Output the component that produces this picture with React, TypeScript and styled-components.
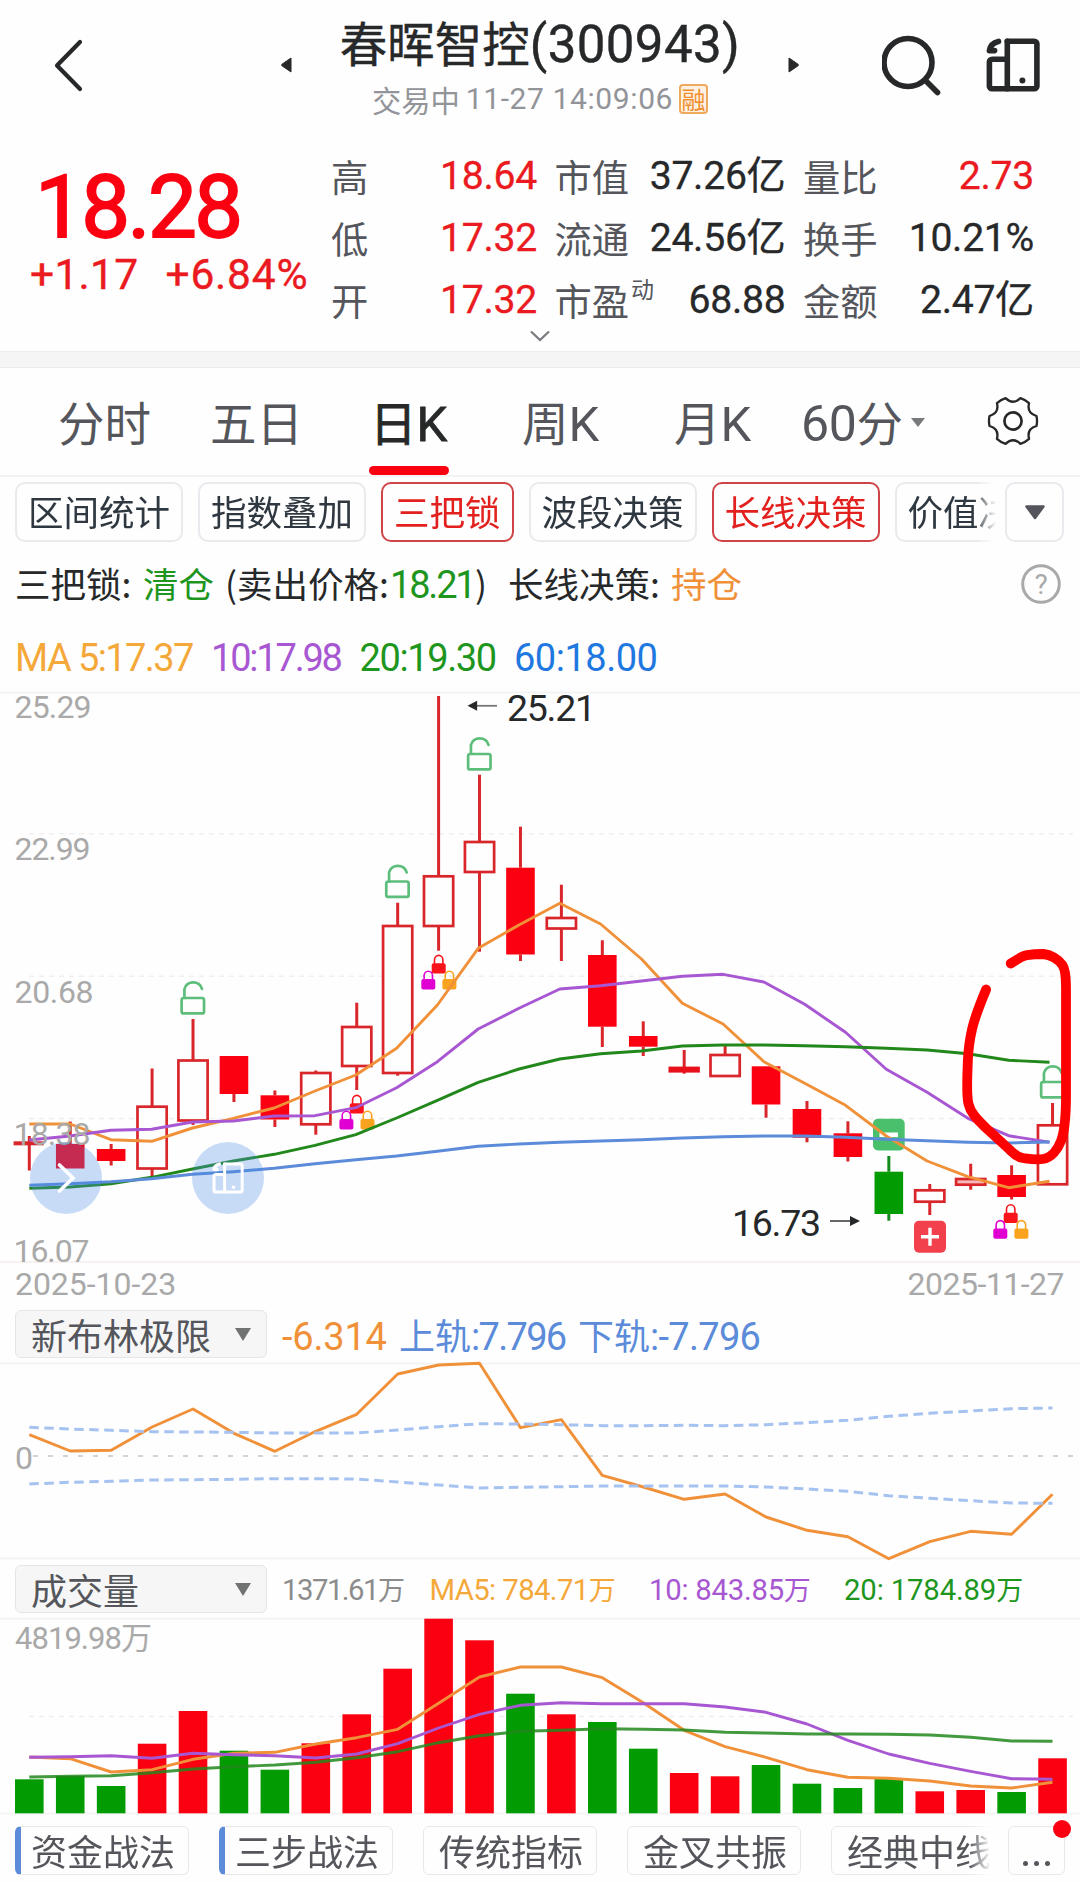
import React from "react";
import styled, { createGlobalStyle, css } from "styled-components";

const CJK = '"Noto Sans CJK SC", sans-serif';
const NUM = 'Roboto, "Noto Sans CJK SC", sans-serif';

const C = {
  red: "#fb0011",
  wick: "#d8262b",
  quoteRed: "#ea1a20",
  green: "#029b02",
  textGreen: "#1e961e",
  orange: "#f0913a",
  amber: "#f5a83a",
  purple: "#a857d2",
  blue: "#5b8bd9",
  ink: "#262829",
  slate: "#54565c",
  mute: "#a9a9a9",
  line: "#f3f3f3",
};

const Global = createGlobalStyle`
  html, body { margin: 0; padding: 0; background: #fefefe; }
  * { box-sizing: border-box; }
`;

const Page = styled.div`
  position: relative;
  width: 1080px;
  height: 1882px;
  overflow: hidden;
  display: flex;
  flex-direction: column;
  background: #fefefe;
  color: ${C.ink};
  font-family: ${CJK};
  white-space: nowrap;
`;

const Num = styled.span<{ $size: number; $ls?: number; $color?: string; $bold?: number }>`
  font-family: ${NUM};
  font-size: ${(p) => p.$size}px;
  letter-spacing: ${(p) => p.$ls ?? 0}px;
  ${(p) => p.$bold && css`-webkit-text-stroke: ${p.$bold}px currentColor;`}
  ${(p) => p.$color && css`color: ${p.$color};`}
`;

/* ---------- header ---------- */
const Header = styled.header`
  height: 130px;
  flex: none;
  display: flex;
  padding-left: 53px;
`;
const BackIcon = styled.svg`
  width: 32px;
  height: 56px;
  margin-top: 37px;
`;
const Arrow = styled.svg`
  width: 14px;
  height: 18px;
  margin-top: 56px;
`;
const PrevArrow = styled(Arrow)`
  margin-left: 194px;
`;
const TitleBlock = styled.div`
  width: 494px;
  display: flex;
  flex-direction: column;
  align-items: center;
`;
const Title = styled.h1`
  margin: 9px 0 3px;
  height: 66px;
  display: flex;
  align-items: center;
  line-height: 66px;
  font-size: 47.5px;
  font-weight: 400;
  -webkit-text-stroke: 0.4px ${C.ink};
`;
const TitleCode = styled(Num)`
  padding-top: 5px;
`;
const Subtitle = styled.div`
  display: flex;
  align-items: center;
  gap: 6px;
  height: 42px;
  font-size: 29.3px;
  line-height: 42px;
  color: #929499;
`;
const MarginTag = styled.span`
  width: 29px;
  height: 30px;
  border: 2px solid #efa95c;
  border-radius: 4px;
  background: #fff1e2;
  color: #ee8f2e;
  font-size: 24px;
  line-height: 26px;
  display: flex;
  justify-content: center;
`;
const SearchSvg = styled.svg`
  width: 62px;
  height: 62px;
  margin: 34px 0 0 81px;
`;
const BoardSvg = styled.svg`
  width: 54px;
  height: 55px;
  margin: 38px 0 0 42px;
`;

/* ---------- quote ---------- */
const Quote = styled.section`
  height: 221px;
  flex: none;
  display: flex;
`;
const PriceBlock = styled.div`
  width: 331px;
  padding: 28px 0 0 30px;
  color: ${C.red};
`;
const Price = styled.div`
  height: 98px;
  line-height: 98px;
  padding-left: 5px;
`;
const Change = styled.div`
  display: flex;
  gap: 27px;
  height: 48px;
  line-height: 48px;
  margin-top: -5px;
  color: ${C.quoteRed};
`;
const StatsColumn = styled.div`
  display: flex;
  flex-direction: column;
`;
const Stats = styled.div`
  display: grid;
  grid-template-columns: 206px 231px 231px;
  column-gap: 17.5px;
  grid-template-rows: repeat(3, 62px);
  padding-top: 14px;
`;
const Stat = styled.div<{ $color?: string }>`
  display: flex;
  justify-content: space-between;
  align-items: center;
  line-height: 62px;
  color: ${(p) => p.$color ?? C.ink};
`;
const StatLabel = styled.span`
  display: flex;
  font-size: 37.3px;
  line-height: 62px;
  padding-top: 2px;
  color: ${C.slate};
`;
const Sup = styled.span`
  font-size: 23px;
  line-height: 39px;
  margin-left: 2px;
`;
const StatValue = styled(Num)`
  padding-top: 2px;
`;
const Expand = styled.svg`
  width: 24px;
  height: 14px;
  margin: -1px 0 0 197px;
`;
const Band = styled.div`
  height: 17px;
  flex: none;
  background: #f5f5f5;
  border: solid #ececec;
  border-width: 1px 0;
`;

/* ---------- period tabs ---------- */
const Tabs = styled.nav`
  height: 109px;
  flex: none;
  display: flex;
  padding-left: 28.5px;
  border-bottom: 2px solid #f2f2f2;
`;
const Tab = styled.div<{ $active?: boolean }>`
  width: 152px;
  display: flex;
  flex-direction: column;
  align-items: center;
  font-size: 46.5px;
  line-height: 106px;
  color: ${(p) => (p.$active ? C.ink : C.slate)};
  ${(p) => p.$active && css`-webkit-text-stroke: 0.8px ${C.ink};`}
`;
const TabLabel = styled.span`
  height: 98px;
  display: flex;
  align-items: baseline;
`;
const Underline = styled.span`
  width: 80px;
  height: 10px;
  border-radius: 5px;
  background: ${C.red};
`;
const PeriodPick = styled.div`
  width: 140px;
  margin-left: 12.5px;
  display: flex;
  align-items: baseline;
  font-size: 46.5px;
  line-height: 106px;
  color: ${C.slate};
`;
const Caret = styled.span<{ $w: number; $h: number; $color: string }>`
  width: 0;
  height: 0;
  border: solid transparent;
  border-width: ${(p) => p.$h}px ${(p) => p.$w / 2}px 0;
  border-top-color: ${(p) => p.$color};
`;
const PeriodCaret = styled(Caret)`
  margin-left: 8px;
  align-self: flex-start;
  margin-top: 50px;
`;
const GearSvg = styled.svg`
  width: 54px;
  height: 54px;
  margin: 26px 0 0 45px;
`;

/* ---------- indicator chips ---------- */
const ChipRow = styled.div`
  height: 65px;
  flex: none;
  display: flex;
  padding: 5px 0 0 15px;
`;
const ChipScroller = styled.div<{ $w: number; $gap: number }>`
  width: ${(p) => p.$w}px;
  flex: none;
  display: flex;
  gap: ${(p) => p.$gap}px;
  overflow: hidden;
  mask-image: linear-gradient(to right, #000 calc(100% - 22px), transparent);
`;
const Chip = styled.div<{ $on?: boolean }>`
  height: 60px;
  flex: none;
  padding: 0 11px;
  border: 2px solid ${(p) => (p.$on ? "#cf4547" : "#e9e9ee")};
  border-radius: 10px;
  font-size: 35.5px;
  line-height: 54px;
  color: ${(p) => (p.$on ? "#e2211f" : "#2f3840")};
`;
const ChipMenu = styled.div`
  width: 59px;
  height: 60px;
  margin-left: 9px;
  border: 2px solid #e9e9ee;
  border-radius: 10px;
  display: flex;
  align-items: center;
  justify-content: center;
`;

/* ---------- signal text ---------- */
const Signal = styled.div`
  height: 88px;
  flex: none;
  display: flex;
  align-items: center;
  justify-content: space-between;
  padding: 0 19px 4px 15px;
  font-size: 35.5px;
  line-height: 60px;
`;
const SignalText = styled.div`
  display: flex;
  align-items: baseline;
`;
const SignalPart = styled.span<{ $w: number; $color?: string }>`
  width: ${(p) => p.$w}px;
  color: ${(p) => p.$color ?? C.ink};
`;
const HelpSvg = styled.svg`
  width: 40px;
  height: 40px;
`;
const Legend = styled.div`
  height: 62px;
  flex: none;
  display: flex;
  padding-left: 15px;
  line-height: 57px;
`;
const LegendItem = styled.span<{ $w: number; $color: string }>`
  width: ${(p) => p.$w}px;
  color: ${(p) => p.$color};
`;

/* ---------- charts ---------- */
const ChartBox = styled.div<{ $h: number }>`
  position: relative;
  height: ${(p) => p.$h}px;
  flex: none;
`;
const ChartSvg = styled.svg`
  display: block;
  overflow: visible;
`;
const Bubble = styled.div<{ $x: number }>`
  position: absolute;
  left: ${(p) => p.$x}px;
  top: 450px;
  width: 72px;
  height: 72px;
  border-radius: 50%;
  background: rgba(72, 138, 232, 0.3);
  display: flex;
  align-items: center;
  justify-content: center;
`;
const Dates = styled.div`
  height: 46px;
  flex: none;
  display: flex;
  justify-content: space-between;
  padding: 0 16px 0 15px;
  line-height: 43px;
`;
const IndicatorRow = styled.div<{ $h: number; $top: number }>`
  height: ${(p) => p.$h}px;
  flex: none;
  display: flex;
  padding: ${(p) => p.$top}px 0 0 15px;
`;
const Select = styled.div`
  width: 252px;
  height: 48px;
  flex: none;
  margin-right: 15px;
  padding: 0 15px 0 15px;
  display: flex;
  align-items: center;
  justify-content: space-between;
  border: 1px solid #e6e6e6;
  border-radius: 6px;
  background: #f6f6f6;
  font-size: 36px;
  line-height: 45px;
  color: ${C.slate};
`;
const Readings = styled.div`
  display: flex;
  align-items: baseline;
`;
const Reading = styled.span<{ $w: number; $color: string; $size: number }>`
  width: ${(p) => p.$w}px;
  display: flex;
  align-items: baseline;
  font-size: ${(p) => p.$size}px;
  line-height: 48px;
  color: ${(p) => p.$color};
`;

/* ---------- bottom strategies ---------- */
const Strategies = styled.div`
  height: 67px;
  flex: none;
  display: flex;
  padding: 11px 0 0 15px;
`;
const Strategy = styled.div<{ $marked?: boolean }>`
  width: 174px;
  height: 49px;
  flex: none;
  border: 1px solid #e8e8e8;
  border-radius: 6px;
  ${(p) => p.$marked && css`
    border-left: 6px solid ${C.blue};
  `}
  padding-left: ${(p) => (p.$marked ? 10 : 15)}px;
  font-size: 36px;
  line-height: 46px;
  color: ${C.slate};
`;
const More = styled.div`
  position: relative;
  width: 57px;
  height: 49px;
  margin-left: 17px;
  border: 1px solid #e8e8e8;
  border-radius: 6px;
  display: flex;
  justify-content: center;
  gap: 6px;
  padding-top: 34px;
`;
const Dot = styled.i`
  width: 5px;
  height: 5px;
  border-radius: 50%;
  background: ${C.slate};
`;
const Badge = styled.i`
  position: absolute;
  right: -7px;
  top: -7px;
  width: 18px;
  height: 18px;
  border-radius: 50%;
  background: ${C.red};
`;

/* ---------- data ---------- */
const X0 = 29.3;
const STEP = 40.93;
const cx = (i: number) => X0 + i * STEP;

type Kind = "up" | "fill" | "down" | "flat";
/* kind, wick top, body top, body bottom, wick bottom */
const candles: [Kind, number, number, number, number][] = [
  ["flat", 1136, 1143.3, 1143.3, 1170.5],
  ["fill", 1121.5, 1144, 1168.5, 1168.5],
  ["fill", 1144, 1149, 1161, 1165.5],
  ["up", 1068.5, 1106.7, 1168.5, 1176.5],
  ["up", 1019, 1060.5, 1120.5, 1125],
  ["fill", 1056, 1056, 1094, 1102],
  ["fill", 1090.5, 1095.3, 1119.5, 1127],
  ["up", 1070.5, 1073, 1124.3, 1134.7],
  ["up", 1002.7, 1027, 1066, 1090],
  ["up", 902.7, 926, 1073, 1075.7],
  ["up", 696, 876.3, 926, 950.7],
  ["up", 774.7, 842, 872, 951.7],
  ["fill", 826.7, 867.7, 954.5, 961],
  ["up", 884.7, 918, 928.5, 961],
  ["fill", 940.3, 955, 1026.7, 1047],
  ["fill", 1021.3, 1036, 1046.7, 1056],
  ["flat", 1050, 1069.6, 1069.6, 1073.7],
  ["up", 1045.7, 1055, 1076, 1076],
  ["fill", 1066.3, 1066.3, 1104.5, 1117.7],
  ["fill", 1101, 1109, 1137.7, 1142.3],
  ["fill", 1121.3, 1133.3, 1157, 1161.5],
  ["down", 1156, 1171.7, 1214, 1220.7],
  ["up", 1184, 1190.3, 1201.7, 1215],
  ["up", 1163.7, 1179, 1184.7, 1189.7],
  ["fill", 1165.3, 1175, 1197, 1199.5],
  ["up", 1103, 1125.3, 1184.3, 1184.3],
];

const ma5 = [1124, 1124, 1139.7, 1141.3, 1128, 1118.3, 1108, 1091, 1075, 1048.3, 1005, 948.3, 925, 903.3, 924, 959, 1003.3, 1024, 1061.7, 1083.3, 1105.3, 1136, 1161, 1176.7, 1187.7, 1181.3];
const ma10 = [1140, 1136, 1130.3, 1129.3, 1122, 1121, 1116, 1115.7, 1107.7, 1087.7, 1061.7, 1029, 1008.3, 989, 985.7, 981, 976.3, 974.3, 982, 1004.3, 1032.3, 1069.3, 1092.3, 1118.3, 1135.7, 1142.3];
const ma20 = [1188.3, 1187, 1183.7, 1177.3, 1169, 1161, 1154.3, 1145.3, 1134.7, 1118, 1100.3, 1082.3, 1069, 1059, 1053.7, 1051, 1046, 1045, 1045, 1045.7, 1046.7, 1048.3, 1050, 1053.7, 1060.3, 1062.3];
const ma60 = [1185.3, 1183.7, 1181.7, 1178.7, 1174.3, 1171.7, 1168.3, 1163.7, 1159.7, 1156, 1151.3, 1146.3, 1144, 1142.3, 1141, 1139.7, 1138, 1136.7, 1136, 1136, 1137.3, 1139.3, 1140.7, 1142.3, 1143, 1142];

const boll = [1434.7, 1451, 1450.3, 1427, 1409, 1433.3, 1451.3, 1431.3, 1414.3, 1374, 1365, 1363.3, 1427.7, 1419.7, 1475.3, 1487, 1499.3, 1494, 1517, 1530.3, 1536.7, 1558.7, 1541.7, 1531.3, 1534.3, 1494.3];
const bollUp = [1427.3, 1429, 1430.3, 1431.7, 1432, 1432.3, 1433, 1433, 1433, 1430, 1426.7, 1423.7, 1424, 1424.7, 1425.7, 1425.7, 1425.3, 1425.7, 1424.7, 1422.7, 1420.3, 1416.3, 1413.3, 1411, 1408.7, 1408];
const bollLow = [1484, 1482.3, 1481.3, 1480, 1479.7, 1479.3, 1478.7, 1478.7, 1479, 1482, 1485, 1488, 1487.3, 1486.7, 1486, 1486, 1486, 1486, 1487, 1489, 1491.3, 1495.7, 1498.3, 1500.7, 1503, 1503.3];

const volumes: [number, 0 | 1][] = [
  [1779.3, 0], [1776, 0], [1786, 0], [1743.7, 1], [1711, 1], [1750.7, 0], [1769.7, 0], [1743.3, 1], [1714.3, 1], [1668.7, 1], [1618.7, 1], [1640.3, 1], [1693.7, 0],
  [1714.3, 1], [1722, 0], [1748.7, 0], [1773, 1], [1776.3, 1], [1765, 0], [1783.7, 0], [1788, 0], [1778.7, 0], [1791.3, 1], [1790, 1], [1792, 0], [1758.3, 1],
];
const v5 = [1757, 1758.7, 1772, 1769.7, 1759.3, 1753.3, 1752.3, 1744, 1737.7, 1729.3, 1703.3, 1677, 1667, 1667, 1677.7, 1702.7, 1730.3, 1746.7, 1757.3, 1769.7, 1777.3, 1778.3, 1781, 1786, 1788, 1782.3];
const v10 = [1757.3, 1756.7, 1755.7, 1758.3, 1753.3, 1754.7, 1755.7, 1758, 1754, 1743.7, 1728, 1714.3, 1705.3, 1702.7, 1703.7, 1703.7, 1703.7, 1707, 1712.3, 1724, 1740.3, 1754, 1763.3, 1771.3, 1778.7, 1779.3];
const v20 = [1777, 1776.3, 1775.7, 1772.7, 1769, 1766.7, 1765, 1762.3, 1757.7, 1751.7, 1742.7, 1735.7, 1731.3, 1730.3, 1728.7, 1729.3, 1730, 1732.3, 1733, 1734, 1734, 1734.3, 1735, 1737.3, 1741, 1741.3];

const Series = ({ ys, color, step = STEP, dash, w = 2.9, o = 1 }: { ys: number[]; color: string; step?: number; dash?: string; w?: number; o?: number }) => (
  <polyline
    points={ys.map((y, i) => `${(X0 + i * step).toFixed(1)},${y}`).join(" ")}
    fill="none" stroke={color} strokeWidth={w} strokeDasharray={dash} strokeLinejoin="round" opacity={o}
  />
);

const Candle = ({ i }: { i: number }) => {
  const [kind, hi, top, bot, lo] = candles[i];
  const x = cx(i);
  const col = kind === "down" ? "#128a1c" : C.wick;
  return (
    <g>
      {hi < top && <line x1={x} x2={x} y1={hi} y2={top} stroke={col} strokeWidth={3} />}
      {lo > bot && <line x1={x} x2={x} y1={bot} y2={lo} stroke={col} strokeWidth={3} />}
      {kind === "flat" && <rect x={x - 15.7} y={top - (i ? 3 : 2)} width={i ? 31.4 : 30} height={i ? 6 : 4} fill={i ? "#e8101a" : C.wick} />}
      {kind === "up" && <rect x={x - 14.6} y={top} width={29.2} height={bot - top} fill={bot - top < 7 ? "#f7b8b8" : "#fefefe"} stroke={C.wick} strokeWidth={2.7} />}
      {(kind === "fill" || kind === "down") && <rect x={x - 14.3} y={top} width={28.6} height={bot - top} fill={kind === "fill" ? C.red : C.green} />}
    </g>
  );
};

const OpenLock = ({ x, y }: { x: number; y: number }) => (
  <g fill="none" stroke="#5dbd7b" strokeWidth={2.7} strokeLinecap="round">
    <rect x={x - 11.4} y={y + 17.5} width={22.4} height={15.4} rx={2} />
    <path d={`M${x - 8.6} ${y + 17.5}V${y + 8.5}a9 8.5 0 0 1 17.6 0`} />
  </g>
);

const MiniLock = ({ x, y, color }: { x: number; y: number; color: string }) => (
  <g>
    <path d={`M${x - 4.2} ${y + 10}V${y + 5.5}a4.2 4.4 0 0 1 8.4 0V${y + 10}`} fill="none" stroke={color} strokeWidth={1.6} />
    <rect x={x - 7} y={y + 9} width={14} height={10.3} rx={2} fill={color} />
  </g>
);
const LockTrio = ({ x, y }: { x: number; y: number }) => (
  <g>
    <MiniLock x={x} y={y} color="#f8141a" />
    <MiniLock x={x - 10.4} y={y + 15.8} color="#e000d2" />
    <MiniLock x={x + 10.7} y={y + 15.8} color="#faa31e" />
  </g>
);

const Label = ({ x, y, w, s = 32, color = C.mute, children }: { x: number; y: number; w: number; s?: number; color?: string; children: string }) => (
  <text x={x} y={y} fontSize={s} textLength={w} fill={color} fontFamily={NUM}>{children}</text>
);

const Board = ({ color, thin }: { color: string; thin?: boolean }) => (
  <g fill="none" stroke={color} strokeWidth={thin ? 5 : 5.6} strokeLinejoin="round" strokeLinecap="round">
    <path d="M21.3 3.2h27a2.6 2.6 0 0 1 2.6 2.6v42.4a2.6 2.6 0 0 1-2.6 2.6H6a2.6 2.6 0 0 1-2.6-2.6V24a2.8 2.8 0 0 1 2.8-2.8h14.5" />
    <path d="M21.3 3.2v47.6" />
    <path d="M12.5 3.4C7 4.6 4 8 3.4 12.6h5.2" strokeWidth={5.6} />
    <circle cx={36.4} cy={42.5} r={3} fill={color} stroke="none" />
  </g>
);

const gearPath = (() => {
  const p = (r: number, a: number) => `${(27 + r * Math.cos((a * Math.PI) / 180)).toFixed(2)} ${(27 + r * Math.sin((a * Math.PI) / 180)).toFixed(2)}`;
  let d = `M${p(24, -12)}`;
  for (let k = 0; k < 6; k++) {
    const a = k * 60;
    d += `Q${p(24.6, a)} ${p(24, a + 12)}Q${p(15.6, a + 30)} ${p(24, a + 48)}`;
  }
  return d + "Z";
})();

const stats: { label: string; value: string; red?: boolean; sup?: string }[] = [
  { label: "高", value: "18.64", red: true },
  { label: "市值", value: "37.26亿" },
  { label: "量比", value: "2.73", red: true },
  { label: "低", value: "17.32", red: true },
  { label: "流通", value: "24.56亿" },
  { label: "换手", value: "10.21%" },
  { label: "开", value: "17.32", red: true },
  { label: "市盈", value: "68.88", sup: "动" },
  { label: "金额", value: "2.47亿" },
];

const gridProps = { stroke: "#efefef", strokeWidth: 1.6, strokeDasharray: "5 5" };

export default function App() {
  return (
    <>
      <Global />
      <Page>
        <Header>
          <BackIcon viewBox="0 0 32 56"><path d="M27 5L4 28.500l23 23.500" fill="none" stroke={C.ink} strokeWidth={4.2} strokeLinecap="round" strokeLinejoin="round" /></BackIcon>
          <PrevArrow viewBox="0 0 14 18"><path d="M12 2v14L3 9.8a1 1 0 0 1 0-1.6z" fill={C.ink} stroke={C.ink} strokeLinejoin="round" /></PrevArrow>
          <TitleBlock>
            <Title>春晖智控<TitleCode $size={51} $ls={0.4}>(300943)</TitleCode></Title>
            <Subtitle>交易中<Num $size={30} $ls={0.6}>11-27 14:09:06</Num><MarginTag>融</MarginTag></Subtitle>
          </TitleBlock>
          <Arrow viewBox="0 0 14 18"><path d="M2 2v14l9-6.2a1 1 0 0 0 0-1.6z" fill={C.ink} stroke={C.ink} strokeLinejoin="round" /></Arrow>
          <SearchSvg viewBox="0 0 62 62"><g fill="none" stroke={C.ink} strokeWidth={5.6} strokeLinecap="round"><circle cx={26} cy={28.5} r={24} /><path d="M43.5 46.5L55.5 58.5" /></g></SearchSvg>
          <BoardSvg viewBox="0 0 54 55"><Board color={C.ink} /></BoardSvg>
        </Header>

        <Quote>
          <PriceBlock>
            <Price><Num $size={87} $ls={-2.6} $bold={1.8}>18.28</Num></Price>
            <Change><Num $size={42.5} $ls={0.3} $bold={0.4}>+1.17</Num><Num $size={42.5} $ls={0.8} $bold={0.4}>+6.84%</Num></Change>
          </PriceBlock>
          <StatsColumn>
            <Stats>
              {stats.map((s) => (
                <Stat key={s.label} $color={s.red ? C.quoteRed : undefined}>
                  <StatLabel>{s.label}{s.sup && <Sup>{s.sup}</Sup>}</StatLabel>
                  <StatValue $size={39.2} $ls={-0.3} $bold={0.3}>{s.value}</StatValue>
                </Stat>
              ))}
            </Stats>
            <Expand viewBox="0 0 24 14"><path d="M3 2.5l9 8.5 9-8.5" fill="none" stroke="#77797d" strokeWidth={2.2} /></Expand>
          </StatsColumn>
        </Quote>
        <Band />

        <Tabs>
          <Tab>分时</Tab>
          <Tab>五日</Tab>
          <Tab $active><TabLabel>日<Num $size={49}>K</Num></TabLabel><Underline /></Tab>
          <Tab><TabLabel>周<Num $size={49}>K</Num></TabLabel></Tab>
          <Tab><TabLabel>月<Num $size={49}>K</Num></TabLabel></Tab>
          <PeriodPick><Num $size={50} $ls={-0.3}>60</Num>分<PeriodCaret $w={15} $h={9} $color="#77797b" /></PeriodPick>
          <GearSvg viewBox="0 0 54 54"><g fill="none" stroke={C.ink} strokeLinejoin="round"><path d={gearPath} strokeWidth={2.3} /><circle cx={27} cy={27} r={8.6} strokeWidth={2.7} /></g></GearSvg>
        </Tabs>

        <ChipRow>
          <ChipScroller $w={981} $gap={15}>
            <Chip>区间统计</Chip>
            <Chip>指数叠加</Chip>
            <Chip $on>三把锁</Chip>
            <Chip>波段决策</Chip>
            <Chip $on>长线决策</Chip>
            <Chip>价值决策</Chip>
          </ChipScroller>
          <ChipMenu>
            <svg width={22} height={17} viewBox="0 0 22 17"><path d="M2.5 2.5h17L11 14z" fill="#54545c" stroke="#54545c" strokeWidth={2.5} strokeLinejoin="round" /></svg>
          </ChipMenu>
        </ChipRow>

        <Signal>
          <SignalText>
            <SignalPart $w={128}>三把锁:</SignalPart>
            <SignalPart $w={82} $color={C.textGreen}>清仓</SignalPart>
            <SignalPart $w={165}>(卖出价格:</SignalPart>
            <SignalPart $w={85} $color={C.textGreen}><Num $size={38} $ls={-2.2}>18.21</Num></SignalPart>
            <SignalPart $w={33}>)</SignalPart>
            <SignalPart $w={163}>长线决策:</SignalPart>
            <SignalPart $w={80} $color={C.orange}>持仓</SignalPart>
          </SignalText>
          <HelpSvg viewBox="0 0 40 40">
            <circle cx={20} cy={20} r={18.3} fill="none" stroke={C.mute} strokeWidth={3} />
            <text x={20} y={29.5} textAnchor="middle" fontFamily={NUM} fontSize={28} fill={C.mute}>?</text>
          </HelpSvg>
        </Signal>

        <Legend>
          <LegendItem $w={196} $color={C.amber}><Num $size={38} $ls={-1.6}>MA 5:17.37</Num></LegendItem>
          <LegendItem $w={148.5} $color={C.purple}><Num $size={38} $ls={-2.2}>10:17.98</Num></LegendItem>
          <LegendItem $w={154.5} $color={C.textGreen}><Num $size={38} $ls={-1.4}>20:19.30</Num></LegendItem>
          <LegendItem $w={160} $color="#1f78e0"><Num $size={38} $ls={-0.5}>60:18.00</Num></LegendItem>
        </Legend>

        <ChartBox $h={571}>
          <ChartSvg width={1080} height={571} viewBox="0 692 1080 571">
            <line x1={0} x2={1080} y1={692.5} y2={692.5} stroke={C.line} strokeWidth={2} />
            {[833.7, 976.3, 1118.5].map((y) => <line key={y} x1={29} x2={1073} y1={y} y2={y} {...gridProps} />)}
            <line x1={0} x2={1080} y1={1262} y2={1262} stroke="#f8f1f1" strokeWidth={2} />
            {candles.map((_, i) => <Candle key={i} i={i} />)}
            {([[4, 980.5], [9, 864], [11, 736.5], [25, 1064.5]] as const).map(([i, y]) => <OpenLock key={i} x={cx(i)} y={y} />)}
            <LockTrio x={356.8} y={1094.3} />
            <LockTrio x={438.7} y={954.3} />
            <LockTrio x={1010.7} y={1203.7} />
            <rect x={873} y={1118.7} width={31.7} height={31.7} rx={5} fill="#4bc06c" />
            <rect x={879.5} y={1132.5} width={18.5} height={4.6} fill="#fff" />
            <rect x={914} y={1220.7} width={32} height={32} rx={5} fill="#f2404d" />
            <path d="M921 1236.7h18M930 1227.7v18" stroke="#fff" strokeWidth={3.4} />
            <Series ys={ma5} color={C.orange} step={40.81} />
            <Series ys={ma10} color={C.purple} step={40.81} />
            <Series ys={ma20} color="#22881c" step={40.81} />
            <Series ys={ma60} color={C.blue} step={40.81} />
            <Label x={14.5} y={717.7} w={77}>25.29</Label>
            <Label x={14.5} y={860.3} w={76}>22.99</Label>
            <Label x={14.5} y={1002.6} w={79}>20.68</Label>
            <Label x={13.5} y={1144.6} w={77}>18.38</Label>
            <Label x={13.5} y={1262.3} w={76}>16.07</Label>
            <line x1={476} x2={497} y1={705.8} y2={705.8} stroke="#777" strokeWidth={1.8} />
            <path d="M467.5 705.8l9.6-5v10z" fill={C.ink} />
            <Label x={507} y={721.2} w={89} s={37.5} color={C.ink}>25.21</Label>
            <line x1={830} x2={851} y1={1221} y2={1221} stroke="#555" strokeWidth={1.8} />
            <path d="M860 1221l-10-5v10z" fill={C.ink} />
            <Label x={732} y={1236} w={89} s={37.5} color={C.ink}>16.73</Label>
            <path
              d="M1010.7 963.5C1018 959 1022 956 1027 955.2S1038 954 1043.4 954c7 .6 15 5 19 11s3.6 17 3.6 25V1100c-.3 20-1.5 32-5 41s-10 17-18 18-13 0-20-1-10-5-13-8l-24-22c-8-8-15-14-17.5-24s-1-32-.6-44 1.5-19 4.2-31 9-27.5 14-39.5"
              fill="none" stroke="#ff0000" strokeWidth={9.8} strokeLinecap="round" strokeLinejoin="round"
            />
          </ChartSvg>
          <Bubble $x={30}><svg width={22} height={34} viewBox="0 0 22 34"><path d="M4.5 4L18 17 4.5 30" fill="none" stroke="#fff" strokeWidth={3.6} strokeLinecap="round" /></svg></Bubble>
          <Bubble $x={192}><svg width={32} height={32} viewBox="0 0 54 54"><Board color="#fff" thin /></svg></Bubble>
        </ChartBox>

        <Dates>
          <Num $size={32} $ls={-0.05} $color={C.mute}>2025-10-23</Num>
          <Num $size={32} $ls={-0.5} $color={C.mute}>2025-11-27</Num>
        </Dates>

        <IndicatorRow $h={54} $top={1}>
          <Select>新布林极限<Caret $w={17} $h={13} $color="#707371" /></Select>
          <Readings>
            <Reading $w={117} $size={36} $color={C.orange}><Num $size={38} $ls={-0.2}>-6.314</Num></Reading>
            <Reading $w={179} $size={36} $color={C.blue}>上轨<Num $size={38} $ls={-1.7}>:7.796</Num></Reading>
            <Reading $w={190} $size={36} $color={C.blue}>下轨<Num $size={38} $ls={-0.7}>:-7.796</Num></Reading>
          </Readings>
        </IndicatorRow>

        <ChartBox $h={196}>
          <ChartSvg width={1080} height={196} viewBox="0 1363 1080 196">
            <line x1={0} x2={1080} y1={1363.5} y2={1363.5} stroke={C.line} strokeWidth={2} />
            <line x1={0} x2={1080} y1={1558.5} y2={1558.5} stroke={C.line} strokeWidth={2} />
            <line x1={33} x2={1073} y1={1456} y2={1456} stroke="#d2d2d2" strokeWidth={2} strokeDasharray="5 10" />
            <Label x={15} y={1468.5} w={17}>0</Label>
            <Series ys={boll} color={C.orange} />
            <Series ys={bollUp} color="#a5c2f0" dash="9.5 5.5" w={3} />
            <Series ys={bollLow} color="#a5c2f0" dash="9.5 5.5" w={3} />
          </ChartSvg>
        </ChartBox>

        <IndicatorRow $h={59} $top={6}>
          <Select>成交量<Caret $w={17} $h={13} $color="#707371" /></Select>
          <Readings>
            <Reading $w={147.5} $size={27} $color="#8c8c8c"><Num $size={29.3} $ls={-1.5}>1371.61</Num>万</Reading>
            <Reading $w={219.5} $size={27} $color={C.amber}><Num $size={29.3} $ls={-0.6}>MA5: 784.71</Num>万</Reading>
            <Reading $w={195} $size={27} $color={C.purple}><Num $size={29.3} $ls={-0.25}>10: 843.85</Num>万</Reading>
            <Reading $w={190} $size={27} $color={C.textGreen}><Num $size={29.3} $ls={-0.15}>20: 1784.89</Num>万</Reading>
          </Readings>
        </IndicatorRow>

        <ChartBox $h={197}>
          <ChartSvg width={1080} height={197} viewBox="0 1618 1080 197">
            <line x1={0} x2={1080} y1={1618.7} y2={1618.7} stroke={C.line} strokeWidth={2} />
            <line x1={0} x2={1080} y1={1813.5} y2={1813.5} stroke={C.line} strokeWidth={1.5} />
            <line x1={29} x2={1073} y1={1716.5} y2={1716.5} {...gridProps} />
            {volumes.map(([y, up], i) => <rect key={i} x={cx(i) - 14.3} y={y} width={28.6} height={1813.3 - y} fill={up ? C.red : C.green} />)}
            <Series ys={v5} color={C.orange} />
            <Series ys={v10} color={C.purple} />
            <Series ys={v20} color="#22881c" o={0.85} />
            <Label x={15} y={1649.3} w={137} s={31}>4819.98万</Label>
          </ChartSvg>
        </ChartBox>

        <Strategies>
          <ChipScroller $w={976} $gap={30}>
            <Strategy $marked>资金战法</Strategy>
            <Strategy $marked>三步战法</Strategy>
            <Strategy>传统指标</Strategy>
            <Strategy>金叉共振</Strategy>
            <Strategy>经典中线</Strategy>
          </ChipScroller>
          <More><Dot /><Dot /><Dot /><Badge /></More>
        </Strategies>
      </Page>
    </>
  );
}
